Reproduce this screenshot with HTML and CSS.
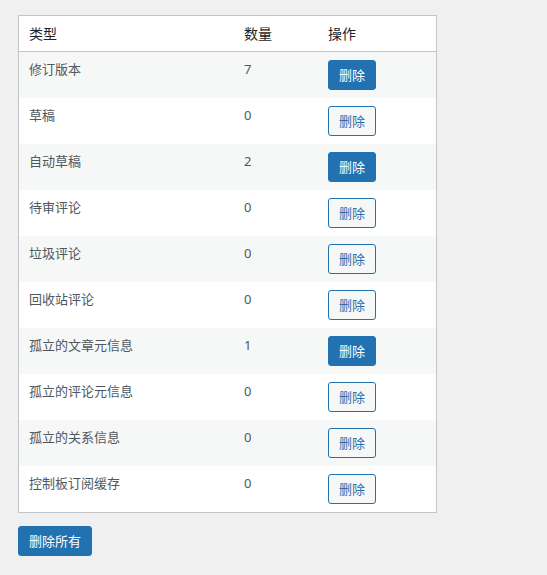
FILE: index.html
```html
<!DOCTYPE html>
<html lang="zh-CN">
<head>
    <meta charset="UTF-8">
    <meta name="viewport" content="width=device-width, initial-scale=1.0">
    <title>数据库清理</title>
    <link rel="stylesheet" href="styles.css">
</head>
<body>
    <div class="wrap">
        <table class="clean-table">
            <thead>
                <tr>
                    <th class="col-type">类型</th>
                    <th class="col-count">数量</th>
                    <th class="col-action">操作</th>
                </tr>
            </thead>
            <tbody>
                <tr>
                    <td>修订版本</td>
                    <td>7</td>
                    <td><button class="btn btn-primary">删除</button></td>
                </tr>
                <tr>
                    <td>草稿</td>
                    <td>0</td>
                    <td><button class="btn">删除</button></td>
                </tr>
                <tr>
                    <td>自动草稿</td>
                    <td>2</td>
                    <td><button class="btn btn-primary">删除</button></td>
                </tr>
                <tr>
                    <td>待审评论</td>
                    <td>0</td>
                    <td><button class="btn">删除</button></td>
                </tr>
                <tr>
                    <td>垃圾评论</td>
                    <td>0</td>
                    <td><button class="btn">删除</button></td>
                </tr>
                <tr>
                    <td>回收站评论</td>
                    <td>0</td>
                    <td><button class="btn">删除</button></td>
                </tr>
                <tr>
                    <td>孤立的文章元信息</td>
                    <td>1</td>
                    <td><button class="btn btn-primary">删除</button></td>
                </tr>
                <tr>
                    <td>孤立的评论元信息</td>
                    <td>0</td>
                    <td><button class="btn">删除</button></td>
                </tr>
                <tr>
                    <td>孤立的关系信息</td>
                    <td>0</td>
                    <td><button class="btn">删除</button></td>
                </tr>
                <tr>
                    <td>控制板订阅缓存</td>
                    <td>0</td>
                    <td><button class="btn">删除</button></td>
                </tr>
            </tbody>
        </table>
        <button class="btn btn-primary btn-all">删除所有</button>
    </div>
</body>
</html>
```

FILE: styles.css
```css
*{
    box-sizing: border-box;
}
body{
    margin: 0;
    background-color: #f0f0f1;
    color: #50575e;
    font-family: "Noto Sans", "Noto Sans CJK SC", sans-serif;
    font-size: 13px;
}
.wrap{
    padding: 15px 18px;
}
.clean-table{
    width: 419px;
    border: 1px solid #c3c4c7;
    border-spacing: 0;
    background-color: #fff;
    table-layout: fixed;
}
.clean-table th{
    text-align: left;
    font-weight: 400;
    font-size: 14px;
    color: #1d2327;
    line-height: 19px;
    padding: 8px 10px;
    border-bottom: 1px solid #c3c4c7;
}
.col-type{
    width: 215px;
}
.col-count{
    width: 84px;
}
.clean-table td{
    vertical-align: top;
    padding: 8px 10px;
    line-height: 19.5px;
    height: 46px;
}
.clean-table tbody tr:nth-child(odd){
    background-color: #f6f7f7;
}
.btn{
    display: inline-block;
    font-family: inherit;
    font-size: 13px;
    line-height: 28px;
    height: 30px;
    padding: 0 10px;
    border: 1px solid #2271b1;
    border-radius: 3px;
    background-color: #f6f7f7;
    color: #2271b1;
    cursor: pointer;
    vertical-align: top;
}
.btn-primary{
    background-color: #2271b1;
    color: #fff;
}
.btn-all{
    margin-top: 13px;
}
```
